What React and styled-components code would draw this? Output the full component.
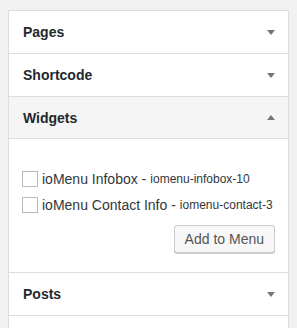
import React, { useState } from 'react';
import styled, { createGlobalStyle } from 'styled-components';

const GlobalStyle = createGlobalStyle`
    body {
        margin: 0;
        background: #f1f1f1;
        font-family: "Liberation Sans", Arial, sans-serif;
    }
`;

const Page = styled.div`
    padding: 10px 8px 0 8px;
`;

const Accordion = styled.ul`
    list-style: none;
    margin: 0;
    padding: 0;
    background: #fff;
    border: 1px solid #ddd;
    border-bottom: none;
`;

const Section = styled.li`
    border-bottom: 1px solid #ddd;
`;

const Title = styled.div`
    height: 42px;
    box-sizing: border-box;
    display: flex;
    align-items: center;
    justify-content: space-between;
    padding: 0 13px 0 14px;
    font-size: 14px;
    font-weight: 700;
    color: #23282d;
    background: ${p => (p.$open ? '#f5f5f5' : '#fff')};
    border-bottom: ${p => (p.$open ? '1px solid #ddd' : 'none')};
    cursor: pointer;
`;

const Arrow = styled.span`
    width: 0;
    height: 0;
    border-left: 4px solid transparent;
    border-right: 4px solid transparent;
    ${p => (p.$up
        ? 'border-bottom: 5px solid #72777c; margin-top: -1px;'
        : 'border-top: 5px solid #72777c; margin-top: 1px;')}
`;

const Content = styled.div`
    padding: 27px 13px 19px 13px;
    display: flex;
    flex-direction: column;
`;

const Item = styled.label`
    height: 26px;
    display: flex;
    align-items: center;
    font-size: 14px;
    color: #32373c;
    white-space: nowrap;
`;

const Check = styled.span`
    width: 16px;
    height: 16px;
    box-sizing: border-box;
    border: 1px solid #b4b9be;
    background: ${p => (p.$checked ? '#eaf2fa' : '#fff')};
    margin-right: 4px;
    flex-shrink: 0;
`;

const Slug = styled.span`
    font-size: 12px;
    margin-left: 4px;
`;

const Actions = styled.div`
    display: flex;
    justify-content: flex-end;
    margin-top: 7px;
`;

const Button = styled.button`
    height: 28px;
    padding: 0 10px;
    font-family: "Liberation Sans", Arial, sans-serif;
    font-size: 14px;
    color: #555;
    background: #f7f7f7;
    border: 1px solid #ccc;
    border-radius: 3px;
    box-shadow: 0 1px 0 #ccc;
    cursor: pointer;
`;

const widgets = [
    { name: 'ioMenu Infobox', slug: 'iomenu-infobox-10' },
    { name: 'ioMenu Contact Info', slug: 'iomenu-contact-3' },
];

export default function App() {
    const [open, setOpen] = useState('Widgets');
    const [checked, setChecked] = useState({});

    const sections = ['Pages', 'Shortcode', 'Widgets', 'Posts'];

    return (
        <Page>
            <GlobalStyle />
            <Accordion>
                {sections.map(name => (
                    <Section key={name}>
                        <Title $open={open === name} onClick={() => setOpen(open === name ? null : name)}>
                            {name}
                            <Arrow $up={open === name} />
                        </Title>
                        {open === name && name === 'Widgets' && (
                            <Content>
                                {widgets.map(w => (
                                    <Item key={w.slug} onClick={() => setChecked({ ...checked, [w.slug]: !checked[w.slug] })}>
                                        <Check $checked={checked[w.slug]} />
                                        {w.name} -<Slug>{w.slug}</Slug>
                                    </Item>
                                ))}
                                <Actions>
                                    <Button>Add to Menu</Button>
                                </Actions>
                            </Content>
                        )}
                    </Section>
                ))}
                {/* next section starts just below the frame */}
                <Section>
                    <Title />
                </Section>
            </Accordion>
        </Page>
    );
}
